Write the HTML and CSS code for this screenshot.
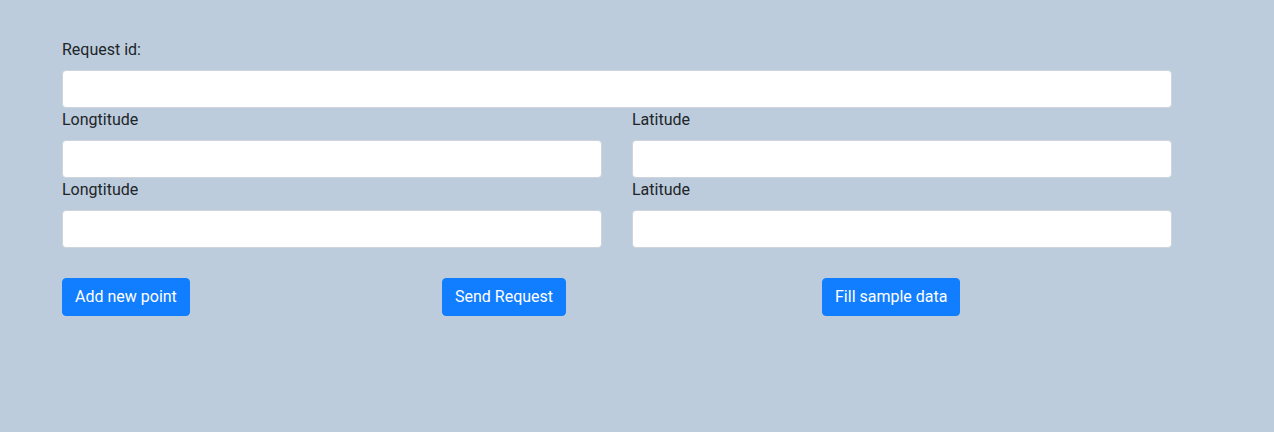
FILE: index.html
```html
<!DOCTYPE html>
<html lang="en">
<head>
<meta charset="utf-8">
<meta name="viewport" content="width=device-width, initial-scale=1">
<title>Request form</title>
<link rel="stylesheet" href="styles.css">
</head>
<body>
<main class="container">
  <form class="request-form">
    <div class="field">
      <label for="request-id">Request id:</label>
      <input class="form-control" type="text" id="request-id">
    </div>
    <div class="point">
      <div class="field">
        <label for="longitude-1">Longtitude</label>
        <input class="form-control" type="text" id="longitude-1">
      </div>
      <div class="field">
        <label for="latitude-1">Latitude</label>
        <input class="form-control" type="text" id="latitude-1">
      </div>
    </div>
    <div class="point">
      <div class="field">
        <label for="longitude-2">Longtitude</label>
        <input class="form-control" type="text" id="longitude-2">
      </div>
      <div class="field">
        <label for="latitude-2">Latitude</label>
        <input class="form-control" type="text" id="latitude-2">
      </div>
    </div>
    <div class="actions">
      <button class="btn" type="button">Add new point</button>
      <button class="btn" type="button">Send Request</button>
      <button class="btn" type="button">Fill sample data</button>
    </div>
  </form>
</main>
</body>
</html>
```
FILE: styles.css
```css
*,
*::before,
*::after {
  box-sizing: border-box;
}

body {
  margin: 0;
  font-family: Roboto, "Liberation Sans", sans-serif;
  font-size: 16px;
  line-height: 24px;
  color: #212529;
  background: #bcccdc;
}

.container {
  padding: 38px 102px 38px 62px;
}

.request-form {
  display: flex;
  flex-direction: column;
}

.field label {
  display: block;
  margin-bottom: 8px;
}

.form-control {
  display: block;
  width: 100%;
  height: 38px;
  padding: 6px 12px;
  font: inherit;
  color: #495057;
  background: #fff;
  border: 1px solid #ced4da;
  border-radius: 4px;
}

.point {
  display: grid;
  grid-template-columns: 1fr 1fr;
  gap: 30px;
}

.actions {
  display: grid;
  grid-template-columns: repeat(3, 1fr);
  gap: 30px;
  justify-items: start;
  margin-top: 30px;
}

.btn {
  padding: 6px 12px;
  font: inherit;
  color: #fff;
  background: #117dff;
  border: 1px solid #117dff;
  border-radius: 4px;
  cursor: pointer;
}
```
